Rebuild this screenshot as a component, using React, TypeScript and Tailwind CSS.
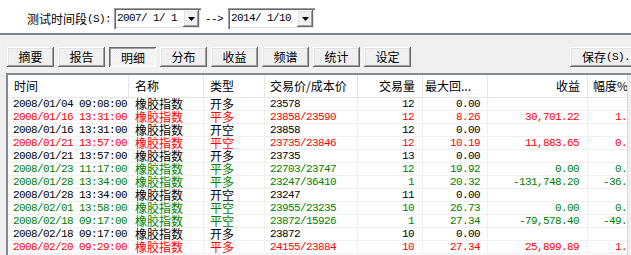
import React from 'react'

type Row = {
  t: string
  n: string
  k: string
  p: string
  q: string
  d: string
  r: string
  f: string
  c: 'k' | 'r' | 'g'
}

const rows: Row[] = [
  { t: '2008/01/04 09:08:00', n: '橡胶指数', k: '开多', p: '23578', q: '12', d: '0.00', r: '', f: '', c: 'k' },
  { t: '2008/01/16 13:31:00', n: '橡胶指数', k: '平多', p: '23858/23590', q: '12', d: '8.26', r: '30,701.22', f: '1.28', c: 'r' },
  { t: '2008/01/16 13:31:00', n: '橡胶指数', k: '开空', p: '23858', q: '12', d: '0.00', r: '', f: '', c: 'k' },
  { t: '2008/01/21 13:57:00', n: '橡胶指数', k: '平空', p: '23735/23846', q: '12', d: '10.19', r: '11,883.65', f: '0.49', c: 'r' },
  { t: '2008/01/21 13:57:00', n: '橡胶指数', k: '开多', p: '23735', q: '13', d: '0.00', r: '', f: '', c: 'k' },
  { t: '2008/01/23 11:17:00', n: '橡胶指数', k: '平多', p: '22703/23747', q: '12', d: '19.92', r: '0.00', f: '0.00', c: 'g' },
  { t: '2008/01/28 13:34:00', n: '橡胶指数', k: '平多', p: '23247/36410', q: '1', d: '20.32', r: '-131,748.20', f: '-36.74', c: 'g' },
  { t: '2008/01/28 13:34:00', n: '橡胶指数', k: '开空', p: '23247', q: '11', d: '0.00', r: '', f: '', c: 'k' },
  { t: '2008/02/01 13:58:00', n: '橡胶指数', k: '平空', p: '23955/23235', q: '10', d: '26.73', r: '0.00', f: '0.00', c: 'g' },
  { t: '2008/02/18 09:17:00', n: '橡胶指数', k: '平空', p: '23872/15926', q: '1', d: '27.34', r: '-79,578.40', f: '-49.12', c: 'g' },
  { t: '2008/02/18 09:17:00', n: '橡胶指数', k: '开多', p: '23872', q: '10', d: '0.00', r: '', f: '', c: 'k' },
  { t: '2008/02/20 09:29:00', n: '橡胶指数', k: '平多', p: '24155/23884', q: '10', d: '27.34', r: '25,899.89', f: '1.07', c: 'r' },
]

const cjk = "font-['Noto_Sans_CJK_SC',sans-serif] text-[12px]"
const mono = "font-['Liberation_Mono',monospace] text-[11px] tracking-[-0.6px]"
const raised =
  'bg-[#f0f0f0] shadow-[inset_-1px_-1px_0_#696969,inset_1px_1px_0_#ffffff,inset_-2px_-2px_0_#a0a0a0,inset_2px_2px_0_#e3e3e3]'
const sunken =
  'bg-white shadow-[inset_1px_1px_0_#a0a0a0,inset_2px_2px_0_#696969,inset_-1px_-1px_0_#ffffff,inset_-2px_-2px_0_#e3e3e3]'
const cols = 'grid grid-cols-[121px_75px_61px_93px_65px_65px_100px_57px]'
const cell = 'border-r border-[#f0f0f0] overflow-hidden whitespace-nowrap'

function Combo({ value }: { value: string }) {
  return (
    <div className={`w-[87px] h-[21px] p-[2px] flex ${sunken}`}>
      <div className={`flex-1 pl-[1px] leading-[17px] text-black ${mono}`}>{value}</div>
      <div className={`w-[16px] h-[17px] flex items-center justify-center ${raised}`}>
        <svg width="7" height="4" viewBox="0 0 7 4">
          <path d="M0 0h7L3.5 4z" fill="#000" />
        </svg>
      </div>
    </div>
  )
}

function Tab({ label, pressed }: { label: string; pressed?: boolean }) {
  if (pressed) {
    return (
      <div
        className={`w-[47px] h-[20px] flex items-center justify-center pt-[1px] pl-[1px] bg-[image:repeating-conic-gradient(#ffffff_0_25%,#e9e9e9_0_50%)] bg-[length:2px_2px] shadow-[inset_1px_1px_0_#696969,inset_-1px_-1px_0_#ffffff,inset_2px_2px_0_#a0a0a0] ${cjk} leading-[14px]`}
      >
        {label}
      </div>
    )
  }
  return (
    <div className={`w-[47px] h-[20px] flex items-center justify-center ${raised} ${cjk} leading-[14px]`}>
      {label}
    </div>
  )
}

export default function App() {
  const color = { k: 'text-black', r: 'text-[#ff0000]', g: 'text-[#008000]' }

  return (
    <div className="w-[631px] h-[255px] overflow-hidden bg-[#f0f0f0] text-black">
      <div className="h-[33px] bg-white pt-[8px] pl-[27px]">
        <div className="flex items-center h-[21px]">
          <span className={`${cjk} leading-[14px]`}>测试时间段</span>
          <span className={`${mono} leading-[14px] mr-[3px]`}>(S):</span>
          <Combo value="2007/ 1/ 1" />
          <span className={`${mono} ml-[4px] mr-[5px] leading-[14px]`}>--&gt;</span>
          <Combo value="2014/ 1/10" />
        </div>
      </div>
      <div className="h-[2px] bg-[#7b8693]" />

      <div className="flex pt-[12px] pl-[7px] gap-[4px]">
        <Tab label="摘要" />
        <Tab label="报告" />
        <Tab label="明细" pressed />
        <Tab label="分布" />
        <Tab label="收益" />
        <Tab label="频谱" />
        <Tab label="统计" />
        <Tab label="设定" />
        <div
          className={`ml-auto -mr-[11px] w-[72px] h-[20px] flex items-center justify-center shrink-0 ${raised}`}
        >
          <span className={`${cjk} leading-[14px]`}>保存</span>
          <span className={`${mono} leading-[14px]`}>(S).</span>
        </div>
      </div>

      <div className="mt-[6px] ml-[6px] h-[182px] border-t-2 border-l-2 border-[#858a91] flex">
        <div className="w-[619px] overflow-hidden bg-white shrink-0">
          <div className={`${cols} h-[23px] border-b border-[#e5e5e5] w-[637px]`}>
            <div className={`border-r border-[#e5e5e5] pl-[6px] leading-[22px] ${cjk}`}>时间</div>
            <div className={`border-r border-[#e5e5e5] pl-[6px] leading-[22px] ${cjk}`}>名称</div>
            <div className={`border-r border-[#e5e5e5] pl-[6px] leading-[22px] ${cjk}`}>类型</div>
            <div className={`border-r border-[#e5e5e5] pl-[5px] leading-[22px] ${cjk}`}>交易价/成本价</div>
            <div className={`border-r border-[#e5e5e5] pr-[7px] text-right leading-[22px] ${cjk}`}>交易量</div>
            <div className={`border-r border-[#e5e5e5] pl-[2px] leading-[22px] ${cjk}`}>最大回...</div>
            <div className={`border-r border-[#e5e5e5] pr-[7px] text-right leading-[22px] ${cjk}`}>收益</div>
            <div className={`pl-[5px] leading-[22px] whitespace-nowrap ${cjk}`}>幅度%</div>
          </div>
          {rows.map((r, i) => (
            <div key={i} className={`${cols} h-[13px] border-b border-[#f0f0f0] w-[637px] ${color[r.c]}`}>
              <div className={`${cell} pl-[5px] leading-[12px] ${mono}`}>{r.t}</div>
              <div className={`${cell} pl-[6px] leading-[12px] ${cjk}`}>{r.n}</div>
              <div className={`${cell} pl-[6px] leading-[12px] ${cjk}`}>{r.k}</div>
              <div className={`${cell} pl-[5px] leading-[12px] ${mono}`}>{r.p}</div>
              <div className={`${cell} pr-[8px] text-right leading-[12px] ${mono}`}>{r.q}</div>
              <div className={`${cell} pr-[7px] text-right leading-[12px] ${mono}`}>{r.d}</div>
              <div className={`${cell} pr-[8px] text-right leading-[12px] ${mono}`}>{r.r}</div>
              <div className={`${cell} pr-[5px] text-right leading-[12px] ${mono}`}>{r.f}</div>
            </div>
          ))}
        </div>
        <div className="flex-1 bg-[#f0f0f0] border-l border-[#d9d9d9]" />
      </div>
    </div>
  )
}
